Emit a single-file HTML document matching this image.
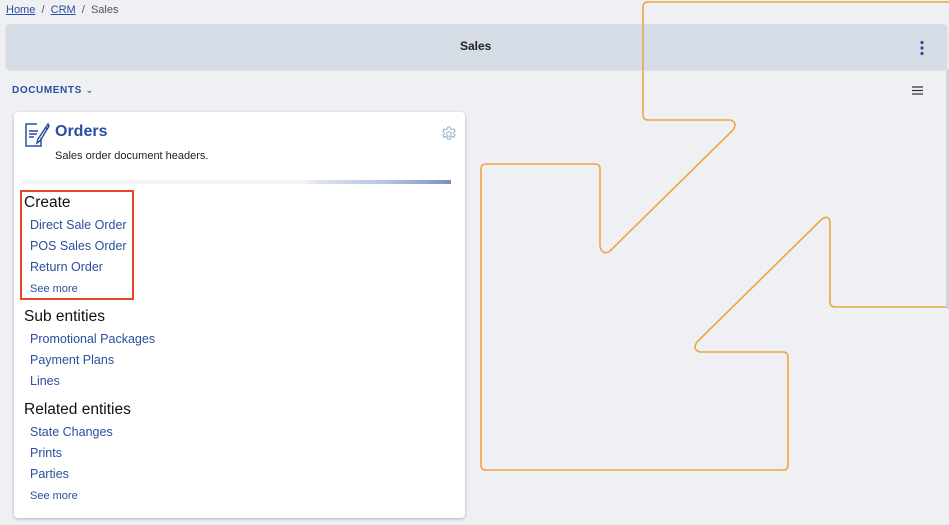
<!DOCTYPE html>
<html><head><meta charset="utf-8"><style>
*{margin:0;padding:0;box-sizing:border-box}
body{width:949px;height:525px;background:#eef0f4;font-family:"Liberation Sans",sans-serif;position:relative;overflow:hidden;color:#222}
.a{position:absolute;white-space:nowrap}
.bc{top:4px;left:6px;font-size:11px;color:#555}
.bc u{color:#2a4ea0}
.bar{left:6px;top:24px;width:941px;height:45px;background:#d5dce6;border-radius:4px;box-shadow:0 1px 2px rgba(0,0,0,.15)}
.card{left:14px;top:112px;width:451px;height:406px;background:#fff;border-radius:4px;box-shadow:0 1px 3px rgba(0,0,0,.25)}
.h{font-size:15.5px;color:#111}
.l{font-size:12.5px;color:#2a4ea0}
.m{font-size:11px;color:#2a4ea0}
</style></head><body>
<div class="a bc"><u>Home</u> &nbsp;/&nbsp; <u>CRM</u> &nbsp;/&nbsp; Sales</div>
<div class="a bar"></div>
<div class="a" style="left:460px;top:39px;font-size:12px;font-weight:bold">Sales</div>
<svg class="a" style="left:918px;top:40px" width="8" height="16"><circle cx="4" cy="2.5" r="1.6" fill="#2a4ea0"/><circle cx="4" cy="8" r="1.6" fill="#2a4ea0"/><circle cx="4" cy="13.5" r="1.6" fill="#2a4ea0"/></svg>
<div class="a" style="left:12px;top:85px;font-size:10px;font-weight:bold;color:#2a4ea0;letter-spacing:.6px">DOCUMENTS <span style="font-weight:normal">⌄</span></div>
<svg class="a" style="left:912px;top:86px" width="12" height="9"><path d="M0 1h11M0 4.5h11M0 8h11" stroke="#333" stroke-width="1.3"/></svg>
<div class="a card"></div>
<svg class="a" style="left:24px;top:122px" width="26" height="26" fill="none" stroke="#2a4ea0" stroke-width="1.5"><path d="M13 2H2v22h15v-8"/><path d="M5 9h9M5 12h8M5 15h5"/><path d="M24 2L14 17l-1 4 3-2L25 4zM22 6l2 1.5"/></svg>
<div class="a" style="left:55px;top:123px;font-size:16px;font-weight:bold;color:#2a4ea0">Orders</div>
<svg class="a" style="left:441px;top:126px" width="16" height="16" fill="none" stroke="#9fb0d6" stroke-width="1.1"><circle cx="8" cy="8" r="2.3"/><path d="M6.8 1h2.4l.4 1.9 1.5.8 1.8-.8 1.2 2-1.3 1.4v1.6l1.3 1.4-1.2 2-1.8-.8-1.5.8-.4 1.9H6.8l-.4-1.9-1.5-.8-1.8.8-1.2-2 1.3-1.4V6.3L1.9 4.9l1.2-2 1.8.8 1.5-.8z"/></svg>
<div class="a" style="left:55px;top:150px;font-size:11px;color:#222">Sales order document headers.</div>
<div class="a" style="left:22px;top:180px;width:429px;height:4px;background:linear-gradient(90deg,#f2f4f8 0,#f2f4f8 65%,#d9e2f0 70%,#b6c3e0 85%,#7a8fc2 100%)"></div>
<div class="a" style="left:20px;top:190px;width:114px;height:110px;border:2px solid #e8442a"></div>
<div class="a h" style="left:24px;top:194px">Create</div>
<div class="a l" style="left:30px;top:218px">Direct Sale Order</div>
<div class="a l" style="left:30px;top:239px">POS Sales Order</div>
<div class="a l" style="left:30px;top:260px">Return Order</div>
<div class="a m" style="left:30px;top:283px">See more</div>
<div class="a h" style="left:24px;top:308px">Sub entities</div>
<div class="a l" style="left:30px;top:332px">Promotional Packages</div>
<div class="a l" style="left:30px;top:353px">Payment Plans</div>
<div class="a l" style="left:30px;top:374px">Lines</div>
<div class="a h" style="left:24px;top:401px">Related entities</div>
<div class="a l" style="left:30px;top:425px">State Changes</div>
<div class="a l" style="left:30px;top:446px">Prints</div>
<div class="a l" style="left:30px;top:467px">Parties</div>
<div class="a m" style="left:30px;top:490px">See more</div>
<svg class="a" style="left:0;top:0" width="949" height="525" fill="none" stroke="#f0a540" stroke-width="1.6" stroke-linejoin="round"><path d="M960 2H648Q643 2 643 7V115Q643 120 648 120H730Q738 122 733 130L610 251Q602 256 600 246V169Q600 164 595 164H486Q481 164 481 169V465Q481 470 486 470H783Q788 470 788 465V357Q788 352 783 352H700Q692 350 697 342L822 219Q830 214 830 224V302Q830 307 835 307H948"/></svg>
<div class="a" style="left:946px;top:69px;width:3px;height:240px;background:#d0d4dc"></div>
</body></html>
